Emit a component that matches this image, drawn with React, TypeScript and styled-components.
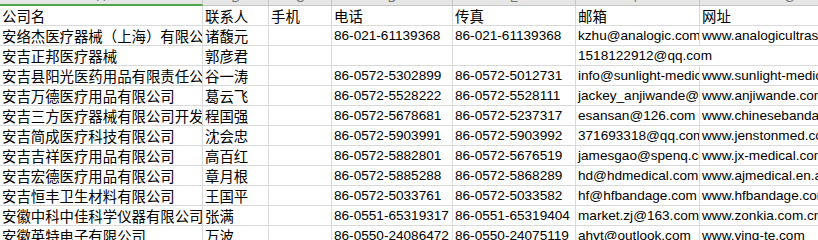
import * as React from 'react';
import styled, { createGlobalStyle } from 'styled-components';

const GlobalStyle = createGlobalStyle`
  html, body {
    margin: 0;
    padding: 0;
    background: #ffffff;
    overflow: hidden;
  }
`;

const COLUMNS = ['203px', '66px', '63px', '121px', '123px', '124px', '180px'];

const Sheet = styled.div`
  display: grid;
  grid-template-columns: ${COLUMNS.join(' ')};
  grid-template-rows: 6px;
  grid-auto-rows: 20px;
  width: max-content;
  font-family: 'Noto Sans CJK SC', 'Liberation Sans', sans-serif;
  color: #000000;
`;

const ColumnHead = styled.div<{ $selected?: boolean }>`
  height: ${(p) => (p.$selected ? '4px' : '5px')};
  background: #e6e6e6;
  border-right: 1px solid #c6c6c6;
  border-bottom: ${(p) => (p.$selected ? '2px solid #4fa54b' : '1px solid #c6c6c6')};
  overflow: hidden;
  display: flex;
  justify-content: center;
  align-items: flex-end;
`;

const ColumnLetter = styled.span`
  font-family: 'Liberation Sans', sans-serif;
  font-size: 12px;
  line-height: 12px;
  color: #777777;
  margin-bottom: 1px;
`;

const Cell = styled.div<{ $latin?: boolean; $span?: number }>`
  box-sizing: border-box;
  height: 20px;
  padding: 0 2px;
  border-right: 1px solid #d9d9d9;
  border-bottom: 1px solid #d9d9d9;
  white-space: nowrap;
  overflow: hidden;
  line-height: 19px;
  font-family: ${(p) =>
    p.$latin
      ? "'Liberation Sans', 'Noto Sans CJK SC', sans-serif"
      : "'Noto Sans CJK SC', 'Liberation Sans', sans-serif"};
  font-size: ${(p) => (p.$latin ? '13.6px' : '14.4px')};
  grid-column: ${(p) => (p.$span ? `span ${p.$span}` : 'auto')};
`;

const HEADER = ['公司名', '联系人', '手机', '电话', '传真', '邮箱', '网址'];

// columns whose content is latin (phone, fax, mail, web)
const LATIN = [false, false, false, true, true, true, true];

const ROWS: string[][] = [
  ['安络杰医疗器械（上海）有限公司', '诸馥元', '', '86-021-61139368', '86-021-61139368', 'kzhu@analogic.com', 'www.analogicultrasound.com'],
  ['安吉正邦医疗器械', '郭彦君', '', '', '', '1518122912@qq.com'],
  ['安吉县阳光医药用品有限责任公司', '谷一涛', '', '86-0572-5302899', '86-0572-5012731', 'info@sunlight-medical.com', 'www.sunlight-medical.com'],
  ['安吉万德医疗用品有限公司', '葛云飞', '', '86-0572-5528222', '86-0572-5528111', 'jackey_anjiwande@163.com', 'www.anjiwande.com'],
  ['安吉三方医疗器械有限公司开发区分公司', '程国强', '', '86-0572-5678681', '86-0572-5237317', 'esansan@126.com', 'www.chinesebandage.com'],
  ['安吉简成医疗科技有限公司', '沈会忠', '', '86-0572-5903991', '86-0572-5903992', '371693318@qq.com', 'www.jenstonmed.com'],
  ['安吉吉祥医疗用品有限公司', '高百红', '', '86-0572-5882801', '86-0572-5676519', 'jamesgao@spenq.com', 'www.jx-medical.com'],
  ['安吉宏德医疗用品有限公司', '章月根', '', '86-0572-5885288', '86-0572-5868289', 'hd@hdmedical.com', 'www.ajmedical.en.alibaba.com'],
  ['安吉恒丰卫生材料有限公司', '王国平', '', '86-0572-5033761', '86-0572-5033582', 'hf@hfbandage.com', 'www.hfbandage.com'],
  ['安徽中科中佳科学仪器有限公司', '张满', '', '86-0551-65319317', '86-0551-65319404', 'market.zj@163.com', 'www.zonkia.com.cn'],
  ['安徽英特电子有限公司', '万波', '', '86-0550-24086472', '86-0550-24075119', 'ahyt@outlook.com', 'www.ying-te.com'],
];

const App: React.FunctionComponent = () => {
  return (
    <>
      <GlobalStyle />
      <Sheet>
        {'ABCDEFG'.split('').map((letter, i) => (
          <ColumnHead key={letter} $selected={i === 0}>
            <ColumnLetter>{letter}</ColumnLetter>
          </ColumnHead>
        ))}
        {HEADER.map((text) => (
          <Cell key={text}>{text}</Cell>
        ))}
        {ROWS.map((row, r) =>
          row.map((text, c) => {
            // last filled cell spills into the empty neighbour, like Excel
            const spills = c === row.length - 1 && row.length < HEADER.length;
            return (
              <Cell
                key={`${r}-${c}`}
                $latin={LATIN[c]}
                $span={spills ? HEADER.length - c : undefined}
              >
                {text}
              </Cell>
            );
          })
        )}
      </Sheet>
    </>
  );
};

export default App;
